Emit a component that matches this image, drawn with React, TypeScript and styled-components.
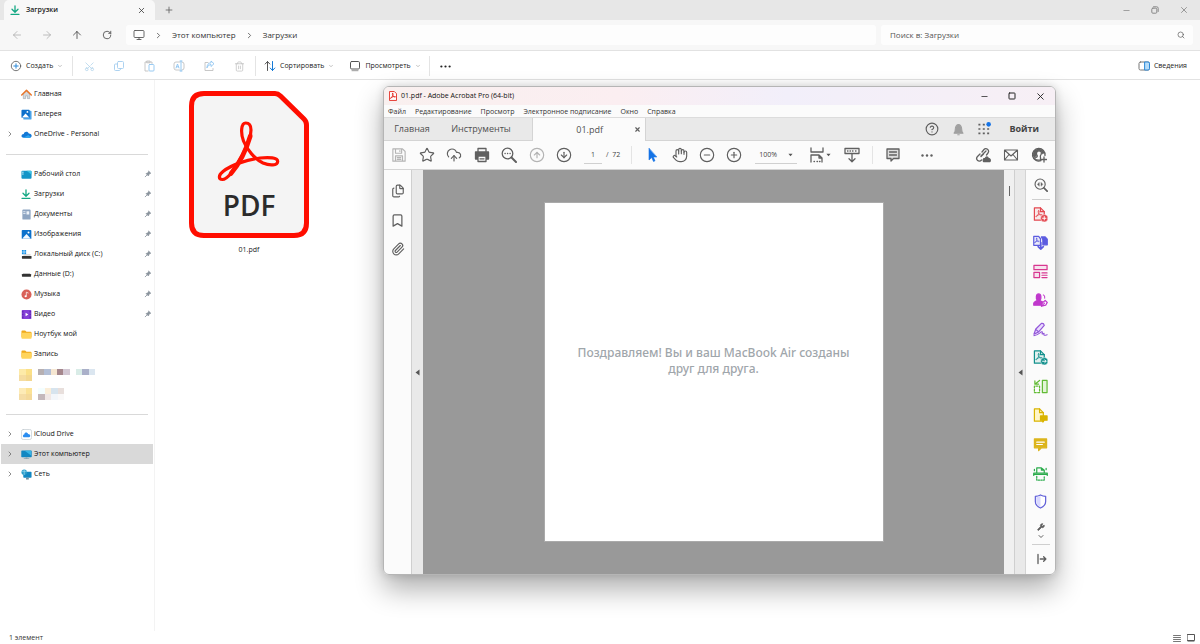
import React from 'react';
import styled, { createGlobalStyle, css } from 'styled-components';
import {
  ArrowLeft, ArrowRight, ArrowUp, RotateCw, Monitor, ChevronRight, ChevronDown, Search, X, Minus, Plus,
  CirclePlus, Scissors, Trash2, Star, CloudUpload, CircleArrowUp, CircleArrowDown, Hand, CircleMinus,
  CircleHelp, Paperclip, Bookmark, Wrench, Square, Files,
} from 'lucide-react';

const GlobalStyle = createGlobalStyle`
  *, *::before, *::after { box-sizing: border-box; }
  body { margin: 0; background: #fff; color: #222; font-family: "Open Sans", "Noto Sans", sans-serif; font-size: 7px; line-height: 10px; }
  button, input, select { font: inherit; color: inherit; border: 0; margin: 0; padding: 0; background: none; outline: 0; }
  ul { list-style: none; margin: 0; padding: 0; }
`;

/* ---------- shared parts ---------- */

const Art = styled.svg<{ $w?: number; $h?: number }>`
  display: block;
  flex: none;
  width: ${(p) => p.$w ?? 12}px;
  height: ${(p) => p.$h ?? p.$w ?? 12}px;
  fill: none;
  stroke-linejoin: round;
  stroke-linecap: round;
`;

const IconButton = styled.button<{ $size?: number; $tone?: string }>`
  display: flex;
  align-items: center;
  justify-content: center;
  flex: none;
  width: ${(p) => p.$size ?? 16}px;
  height: ${(p) => p.$size ?? 16}px;
  color: ${(p) => p.$tone ?? '#606060'};
`;

const Spacer = styled.div`
  flex: 1;
`;

/* ---------- explorer frame ---------- */

const Explorer = styled.div`
  display: flex;
  flex-direction: column;
  min-height: 100vh;
`;

const TabStrip = styled.header`
  display: flex;
  align-items: center;
  height: 20px;
  padding: 0 8px 0 4px;
  background: #e7e7e7;
`;

const ExplorerTab = styled.div`
  display: flex;
  align-items: center;
  align-self: flex-end;
  gap: 6px;
  width: 151px;
  height: 20px;
  padding: 0 8px 0 6px;
  border-radius: 5px 5px 0 0;
  background: #f8f8f8;
  font-weight: 600;
`;

const NewTab = styled(IconButton)`
  margin-left: 6px;
`;

const Controls = styled.div<{ $gap: number }>`
  display: flex;
  align-items: center;
  gap: ${(p) => p.$gap}px;
`;

const NavBar = styled.nav`
  display: flex;
  align-items: center;
  height: 31px;
  padding: 0 7px 0 9px;
  border-bottom: 1px solid #e2e2e2;
  background: #f7f7f7;
`;

const Address = styled.div`
  display: flex;
  flex: 1;
  align-items: center;
  gap: 9px;
  height: 20px;
  margin: 0 5px 0 11px;
  padding: 0 7px;
  border-radius: 3px;
  background: #fdfdfd;
  font-size: 8px;
`;

const Crumb = styled.a`
  color: #333;
  text-decoration: none;
`;

const SearchBox = styled.label`
  display: flex;
  align-items: center;
  width: 312px;
  height: 20px;
  padding: 0 8px 0 9px;
  border-radius: 3px;
  background: #fdfdfd;
  font-size: 8px;

  input { flex: 1; min-width: 0; }
  input::placeholder { color: #555; opacity: 1; }
`;

const CommandBar = styled.div`
  display: flex;
  align-items: center;
  height: 29px;
  padding: 2px 13px 0 10px;
  border-bottom: 1px solid #e2e2e2;
`;

const Command = styled.button<{ $width?: number }>`
  display: flex;
  align-items: center;
  gap: 4px;
  width: ${(p) => (p.$width ? `${p.$width}px` : 'auto')};
  color: #222;
  white-space: nowrap;
`;

const Rule = styled.span<{ $h: number }>`
  flex: none;
  width: 1px;
  height: ${(p) => p.$h}px;
  background: #e4e4e4;
`;

const FileActions = styled.div`
  display: flex;
  gap: 14px;
  padding: 0 8px;
`;

const SortGroup = styled.div`
  display: flex;
  gap: 15px;
  padding: 0 8px;
`;

const Body = styled.div`
  display: flex;
  flex: 1;
`;

/* ---------- sidebar ---------- */

const Sidebar = styled.aside`
  width: 155px;
  flex: none;
  padding: 4px 1px 0;
  border-right: 1px solid #f3f3f3;
`;

const Divider = styled.hr<{ $top: number }>`
  height: 1px;
  margin: ${(p) => p.$top}px 5px 9px 5px;
  border: 0;
  background: #d9d9d9;
`;

const Place = styled.button<{ $selected?: boolean }>`
  display: grid;
  grid-template-columns: 20px 11px 1fr 9px;
  align-items: center;
  width: 152px;
  height: 20px;
  text-align: left;
  color: #111;
  white-space: nowrap;
  ${(p) => p.$selected && css`background: #d9d9d9;`}

  > span:nth-child(1) { padding-left: 5px; display: flex; }
  > span:nth-child(3) { padding-left: 2px; }
`;

const Hidden = styled.div<{ $gap: number }>`
  display: flex;
  gap: 6px;
  padding: ${(p) => p.$gap}px 0 0 18px;
`;

/* ---------- file area ---------- */

const FileArea = styled.main`
  position: relative;
  flex: 1;
  padding: 11px 34px;
`;

const FileItem = styled.figure`
  display: flex;
  flex-direction: column;
  align-items: center;
  gap: 7px;
  width: 120px;
  margin: 0;
`;

const StatusBar = styled.footer`
  display: flex;
  align-items: center;
  height: 13px;
  padding: 0 5px 0 9px;
  color: #333;
`;

/* ---------- acrobat window ---------- */

const Window = styled.section`
  position: absolute;
  top: 6px;
  right: 144px;
  bottom: 56px;
  left: 228px;
  display: flex;
  flex-direction: column;
  overflow: hidden;
  border: 1px solid #b5b5b5;
  border-radius: 6px;
  background: #fbfbfb;
`;

const WindowShadow = styled.div`
  position: absolute;
  top: 6px;
  right: 144px;
  bottom: 56px;
  left: 228px;
  border-radius: 6px;
  box-shadow: 0 14px 28px rgba(0, 0, 0, 0.32), 0 0 8px rgba(0, 0, 0, 0.14);
`;

const TitleBar = styled.div`
  display: flex;
  align-items: center;
  gap: 4px;
  height: 18px;
  padding: 0 7px 0 5px;
  background: linear-gradient(90deg, #f9f0ef, #fbeef1 35%, #f2effa 60%, #f7eff5);
  color: #111;
`;

const MenuBar = styled.nav`
  display: flex;
  align-items: center;
  gap: 9px;
  height: 13px;
  padding: 1px 4px 0;
  border-bottom: 1px solid #dcdcdc;

  button { white-space: nowrap; color: #333; }
`;

const DocTabs = styled.div`
  display: flex;
  align-items: center;
  height: 23px;
  padding-right: 16px;
  border-bottom: 1px solid #d4d4d4;
  background: #e9e9e9;
  font-size: 9px;
  line-height: 12px;
  color: #505050;
`;

const DocTab = styled.button<{ $width: number }>`
  width: ${(p) => p.$width}px;
  text-align: center;
`;

const ActiveTab = styled.div`
  display: flex;
  align-items: center;
  justify-content: flex-end;
  gap: 26px;
  width: 114px;
  height: 23px;
  margin: 0 0 -1px 10px;
  border: solid #d4d4d4;
  border-width: 0 1px;
  background: #fbfbfb;
`;

const SignIn = styled.button`
  margin-left: 17px;
  font-weight: 700;
  color: #444;
`;

const Tools = styled.div`
  display: flex;
  align-items: center;
  height: 29px;
  padding: 0 8px 0 7px;
  border-bottom: 1px solid #d4d4d4;
  color: #444;
`;

const ToolGroup = styled.div<{ $width: number; $left?: number }>`
  display: flex;
  align-items: center;
  justify-content: space-between;
  flex: none;
  width: ${(p) => p.$width}px;
  margin-left: ${(p) => p.$left ?? 0}px;
`;

const PageField = styled.label`
  display: flex;
  align-items: center;
  gap: 4px;
  margin: 0 11px 0 12px;
  white-space: pre;

  input { width: 18px; height: 17px; border-bottom: 1px solid #d0d0d0; text-align: center; }
`;

const ZoomField = styled.label`
  display: flex;
  align-items: center;
  width: 42px;
  height: 17px;
  margin: 0 12px 0 13px;
  padding: 0 4px;
  border-bottom: 1px solid #d0d0d0;

  select { flex: 1; min-width: 0; appearance: none; }
`;

const Viewer = styled.div`
  display: flex;
  flex: 1;
`;

const LeftRail = styled.div`
  display: flex;
  flex-direction: column;
  align-items: center;
  gap: 13px;
  width: 27px;
  padding: 13px 0;
`;

const Handle = styled.div<{ $width: number }>`
  display: flex;
  align-items: center;
  justify-content: center;
  width: ${(p) => p.$width}px;
  border-left: 1px solid #cfcfcf;
  background: #e9e9e9;
`;

const Canvas = styled.div`
  display: flex;
  justify-content: center;
  align-items: flex-start;
  flex: 1;
  padding-top: 32px;
  background: #999;
`;

const Sheet = styled.article`
  display: flex;
  align-items: center;
  justify-content: center;
  width: 340px;
  aspect-ratio: 1;
  padding: 0 30px 22px;
  border: 1px solid #aaa;
  background: #fff;
  color: #9fa6ab;
  font-family: "Noto Sans", sans-serif;
  font-size: 12px;
  font-weight: 500;
  line-height: 16px;
  text-align: center;

  p { margin: 0; white-space: nowrap; }
`;

const Scrollbar = styled.div`
  display: flex;
  justify-content: center;
  width: 10px;
  padding-top: 16px;
  background: #f0f0f0;

  span { width: 1px; height: 10px; background: #666; }
`;

const RightRail = styled.div`
  display: flex;
  flex-direction: column;
  align-items: center;
  width: 30px;
  padding: 7px 0;
  border-left: 1px solid #d4d4d4;

  hr { flex: none; width: 18px; height: 1px; margin: 6px 0; border: 0; background: #cfcfcf; }
  hr:last-of-type { margin-top: 4px; }
`;

const RailTools = styled.div`
  display: flex;
  flex-direction: column;
  justify-content: space-between;
  height: 304px;
`;

/* ---------- drawings ---------- */

const TREFOIL =
  'M56.7 32C52 32 51.5 42 54.5 50C58 59 66 68 74 72C81 75 88.5 74.5 88.7 70.5C88.8 66.5 80 66 71 67C58 68.5 42 74 34 80.5C29 84.5 29.5 88.5 33.5 88.5C40 88.5 48 74.5 54 63C59 53 62 45 62 39C62 34 60 32 56.7 32Z';

const PdfIcon = () => (
  <Art $w={120} $h={147} viewBox="0 0 120 147">
    <path d="M15 2.500H86Q89 2.500 91.500 5L115 28Q117.500 30.500 117.500 34V132Q117.500 144.500 105 144.500H15Q2.500 144.500 2.500 132V15Q2.500 2.500 15 2.500Z" fill="#f4f4f4" stroke="#ff0d00" strokeWidth="5" />
    <path d={TREFOIL} stroke="#f10" strokeWidth="3.2" />
    <path d="M61.3 45C57.500 58 50 73 42 82.500" stroke="#f10" strokeWidth="4.600" />
    <text x="60" y="125" textAnchor="middle" fontFamily="'Open Sans', sans-serif" fontSize="28" fontWeight="600" fill="#2b2b2b">PDF</text>
  </Art>
);

const DownloadArt = ({ size = 10 }: { size?: number }) => (
  <Art $w={size} viewBox="0 0 10 10" stroke="#14a884" strokeWidth="1.3"><path d="M5 .8V7M2 4.300L5 7.200L8 4.300M1 9.300H9" /></Art>
);

const AcrobatArt = () => (
  <Art $w={8} $h={10} viewBox="0 0 9 11">
    <path d="M1 .5H6L8.500 3V10.500H.5V1Z" fill="#fff" stroke="#e2231a" />
    <path d={TREFOIL} transform="translate(-1.500 -.6) scale(.1)" stroke="#e2231a" strokeWidth="9" />
  </Art>
);

const Pin = () => (
  <Art $w={8} viewBox="0 0 10 10"><path d="M6 1.500L8.500 4L7.500 4.500L6 6L5.500 7.500L2.500 4.500L4 4L5.500 2.500Z" fill="#87919a" stroke="#87919a" strokeWidth=".8" /><path d="M3.500 6.500L1.500 8.500" stroke="#87919a" /></Art>
);

const Caret = () => <Art $w={5} $h={4} viewBox="0 0 6 4"><path d="M.5.500H5.500L3 3.500Z" fill="#555" /></Art>;
const Collapse = () => <Art $w={5} $h={7} viewBox="0 0 5 7"><path d="M4.500.5V6.500L.5 3.500Z" fill="#555" /></Art>;
const Dots = ({ w = 12 }: { w?: number }) => (
  <Art $w={w} $h={3} viewBox="0 0 12 3"><g fill="currentColor"><circle cx="1.500" cy="1.500" r="1.200" /><circle cx="6" cy="1.500" r="1.200" /><circle cx="10.500" cy="1.500" r="1.200" /></g></Art>
);

const placeArt: Record<string, React.ReactNode> = {
  home: <><path d="M2.500 5.500V10.500H5V7.500H7V10.500H9.500V5.500L6 2.500Z" fill="#d5d9dd" stroke="#9aa0a8" strokeWidth=".6" /><path d="M.8 6.500L6 1.500L11.200 6.500" stroke="#e8762c" strokeWidth="1.600" /></>,
  gallery: <><rect x="2.500" y="2" width="9" height="9.500" rx="1" fill="#4aa3e8" /><rect x=".5" y=".8" width="9" height="9" rx="1" fill="#0b6fcb" /><path d="M1 9.300L5 5L9 9.300Z" fill="#fff" /><circle cx="7" cy="3.200" r="1" fill="#fff" /></>,
  onedrive: <><path d="M3 9.500C-.5 9.500 0 5.500 3 5.500C3.500 2.500 7.500 2 8.500 5C12.500 5 12.500 9.500 9.500 9.500Z" fill="#1479d6" /><path d="M2.500 9.500L8 6.500L11 9Q10.500 9.500 9.500 9.500Z" fill="#2ba5f0" /></>,
  desktop: <><rect x=".5" y="2" width="11" height="8.500" rx="1" fill="#1495c8" /><path d="M6 2H10.500Q11.500 2 11.500 3V6Z" fill="#40c4e4" /><path d="M1.500 3.500H2.500M1.500 5.500H2.500" stroke="#c8f1ff" /></>,
  docs: <><rect x="1.500" y=".5" width="9" height="11" rx="1" fill="#8ea5c2" /><path d="M2.800 3H4.500M2.800 5H4.500" stroke="#e9f0f7" /><rect x="6" y="2.500" width="3" height="3.500" fill="#eef4fa" /></>,
  images: <><rect x=".8" y="1" width="10.500" height="10" rx="1" fill="#0b71cc" /><path d="M1.200 10.500L6 5.500L10.800 10.500Z" fill="#f2f9ff" /><circle cx="8.200" cy="3.700" r="1.100" fill="#fff" /></>,
  disk: <><path d="M1 1H3V3H1ZM3.600 1H5.600V3H3.600ZM1 3.600H3V5.600H1ZM3.600 3.600H5.600V5.600H3.600Z" fill="#1590e6" /><rect x="1" y="7.500" width="10.500" height="3" rx=".5" fill="#333" /><path d="M3 6.500H10" stroke="#b7b7b7" /></>,
  drive: <><path d="M2.500 5H9.500" stroke="#bbb" /><rect x="1" y="5.500" width="10" height="3" rx=".5" fill="#333" /></>,
  music: <><circle cx="6" cy="6" r="5.500" fill="#d96058" /><path d="M5.800 8V3.500L7.800 4.300" stroke="#fff" strokeWidth=".8" /><circle cx="5" cy="8" r="1.100" fill="#fff" /></>,
  video: <><rect x=".8" y="1" width="10.500" height="10" rx="1" fill="#8540d8" /><path d="M2 2.500V10M10 2.500V10" stroke="#4e1a9d" strokeDasharray="1 2" /><path d="M5 4L8 6L5 8Z" fill="#fff" /></>,
  folder: <><path d="M.5 2.500Q.5 1.500 1.500 1.500H4.500L6 3H10.500Q11.500 3 11.500 4V9H.5Z" fill="#efaa1c" /><rect x=".5" y="4" width="11" height="6.500" rx=".8" fill="#ffd45b" /></>,
  icloud: <><rect x=".5" y=".5" width="11" height="11" rx="2" fill="#fff" stroke="#c4ccd2" strokeWidth=".8" /><path d="M3.500 9C1.500 9 1.800 6 3.500 6C4 3.200 7 3.200 7.700 5.500C10.700 5.500 10.700 9 8.800 9Z" fill="#2b8df0" /></>,
  pc: <><rect x=".3" y="1.500" width="11.400" height="7.500" rx=".8" fill="#1287c2" /><path d="M5 9H7V10H9V11H3V10H5Z" fill="#8fa5b0" /><path d="M4 2H11V7Z" fill="#37b4e4" /></>,
  network: <><rect x="2.500" y="3" width="9" height="6.500" rx=".8" fill="#1287c2" /><path d="M5.500 9.500H8.500V11.500H5.500Z" fill="#718c9b" /><circle cx="3.500" cy="3.500" r="3" fill="#2b9cca" /><path d="M1 2.500H6M3.500 1V6" stroke="#b4e7fa" strokeWidth=".6" /></>,
};

interface PlaceData { id: string; label: string; pin?: boolean; open?: boolean; selected?: boolean }

const topPlaces: PlaceData[] = [
  { id: 'home', label: 'Главная' },
  { id: 'gallery', label: 'Галерея' },
  { id: 'onedrive', label: 'OneDrive - Personal', open: true },
];
const pinned: PlaceData[] = [
  { id: 'desktop', label: 'Рабочий стол', pin: true },
  { id: 'download', label: 'Загрузки', pin: true },
  { id: 'docs', label: 'Документы', pin: true },
  { id: 'images', label: 'Изображения', pin: true },
  { id: 'disk', label: 'Локальный диск (C:)', pin: true },
  { id: 'drive', label: 'Данные (D:)', pin: true },
  { id: 'music', label: 'Музыка', pin: true },
  { id: 'video', label: 'Видео', pin: true },
  { id: 'folder', label: 'Ноутбук мой' },
  { id: 'folder', label: 'Запись' },
];
const devices: PlaceData[] = [
  { id: 'icloud', label: 'iCloud Drive', open: true },
  { id: 'pc', label: 'Этот компьютер', open: true, selected: true },
  { id: 'network', label: 'Сеть', open: true },
];

const Places = ({ items }: { items: PlaceData[] }) => (
  <ul>
    {items.map((it) => (
      <li key={it.label}>
        <Place $selected={it.selected}>
          <span>{it.open && <ChevronRight size={8} color="#555" />}</span>
          {it.id === 'download' ? <DownloadArt /> : <Art $w={11} viewBox="0 0 12 12">{placeArt[it.id]}</Art>}
          <span>{it.label}</span>
          <span>{it.pin && <Pin />}</span>
        </Place>
      </li>
    ))}
  </ul>
);

const Blocks = ({ colors, columns, w }: { colors: string[]; columns: number; w: number }) => (
  <Art $w={w} $h={Math.ceil(colors.length / columns) * 6} viewBox={`0 0 ${columns} ${Math.ceil(colors.length / columns)}`} preserveAspectRatio="none" shapeRendering="crispEdges">
    {colors.map((c, i) => <rect key={i} x={i % columns} y={Math.floor(i / columns)} width="1" height="1" fill={c} />)}
  </Art>
);

const MiniPdf = ({ plus }: { plus?: boolean }) => (
  <>
    <path d="M1.500 1H8L12 5V14H1.500Z" fill="currentColor" fillOpacity=".1" />
    <path d="M8 1V5H12" />
    <path d={TREFOIL} transform="translate(-.5 .3) scale(.115)" strokeWidth="7" />
    <circle cx="12" cy="12" r="3.900" fill="currentColor" stroke="#fff" strokeWidth=".5" />
    <path d={plus ? 'M10.200 12H13.800M12 10.200V13.800' : 'M10.200 12H13.800M12.500 10.500L14 12L12.500 13.500'} stroke="#fff" strokeWidth="1" />
  </>
);

const railTools: { name: string; color: string; art: React.ReactNode }[] = [
  { name: 'Создать PDF', color: '#e34850', art: <MiniPdf plus /> },
  { name: 'Объединить', color: '#5c5ce0', art: <><path d="M.8 1.500H6L8 4V11H.8Z" fill="currentColor" fillOpacity=".1" /><path d="M9 2H13L15.200 4.500V10.500H10.500V5Z" fill="currentColor" /><path d={TREFOIL} transform="translate(-.9 .8) scale(.085)" strokeWidth="9" /><path d="M8.300 8V15M5.500 12.500L8.300 15L11 12.500" strokeWidth="1.800" /></> },
  { name: 'Упорядочить', color: '#d83790', art: <><path d="M1 1.500H15V6H1ZM1 9H7V14.500H1Z" fill="currentColor" fillOpacity=".12" /><path d="M9.500 9.500H15M9.500 12H15M9.500 14.500H15" strokeWidth="1.200" /></> },
  { name: 'Запрос подписей', color: '#c038cc', art: <><path d="M6 1C9 1 9 6 7.500 7.500C7.500 9 10 9 11 10L10 13H.8V11C.8 9 4.500 9 4.500 7.500C3 6 3 1 6 1Z" fill="currentColor" /><path d="M9 14L10 10.500L13 8L15.200 10L13.500 13Z" fill="#fff" /><path d="M9 14L12.300 10.800M11 2Q13 3 12.500 5.500" strokeWidth="1.100" /></> },
  { name: 'Заполнить и подписать', color: '#9256d9', art: <><path d="M1 13L3 7.500L9 1.500Q11.500 1 12 3.500L6 10.500L1 13ZM3 8L5.500 10" fill="#eadcff" /><path d="M1 14.500C6 14.500 9.500 8.500 10 11C9 14 10.500 12 11.800 12C11 14.500 12.500 14.500 15 13.500" strokeWidth="1.200" /></> },
  { name: 'Экспорт PDF', color: '#12908c', art: <MiniPdf /> },
  { name: 'Сжать', color: '#62bb35', art: <><path d="M10 1.500H15V14.500H10Z" fill="#e3f5d7" /><path d="M7 14.500H1.500V7.500H7Z" strokeDasharray="2 1.500" /><path d="M7 1.500L2 5.500M2 2V5.500H6" /></> },
  { name: 'Изменить PDF', color: '#d9b400', art: <><path d="M1.500 1H7L11 5V14H1.500Z" fill="#fff6c8" /><path d="M7 1V5H11" /><path d="M8 8.500H15V13H12L10.500 15V13H8Z" fill="currentColor" /></> },
  { name: 'Комментарий', color: '#dcb51c', art: <><path d="M1.500 2H14.500V11.500H9L6 14.500V11.500H1.500Z" fill="currentColor" /><path d="M4 5.500H12M4 8H10" stroke="#fff" /></> },
  { name: 'Сканирование', color: '#2bac4c', art: <><path d="M4 7V2H9L12 4.500V7M9 2V4.500H12M.8 10V7.500H15.200V10" /><path d="M1 9H15" /><path d="M4 11V15H12V11M14 4V1.500M1.500 3.500V5" strokeDasharray="1.500 1.300" /></> },
  { name: 'Защитить', color: '#6160d8', art: <><path d="M8 1Q10.500 2.500 13.500 2.500V8Q13.500 12.500 8 15Q2.500 12.500 2.500 8V2.500Q5.500 2.500 8 1Z" fill="#fff" /><path d="M8 2V14Q3.500 12 3.500 8V3.500Z" fill="#d9d9ff" stroke="none" /></> },
];

const AcroIcon = ({ children, size = 16 }: { children: React.ReactNode; size?: number }) => (
  <Art $w={size} viewBox="0 0 16 16" stroke="currentColor" strokeWidth="1.300">{children}</Art>
);

/* ---------- acrobat ---------- */

const Acrobat = () => (
  <Window aria-label="Adobe Acrobat">
    <TitleBar>
      <AcrobatArt />
      <span>01.pdf - Adobe Acrobat Pro (64-bit)</span>
      <Spacer />
      <Controls $gap={12}>
        <IconButton $tone="#222" aria-label="Свернуть"><Minus size={9} /></IconButton>
        <IconButton $tone="#222" aria-label="Развернуть"><Square size={8} strokeWidth={3} /></IconButton>
        <IconButton $tone="#222" aria-label="Закрыть"><X size={11} /></IconButton>
      </Controls>
    </TitleBar>
    <MenuBar>
      {['Файл', 'Редактирование', 'Просмотр', 'Электронное подписание', 'Окно', 'Справка'].map((m) => <button key={m}>{m}</button>)}
    </MenuBar>
    <DocTabs>
      <DocTab $width={56}>Главная</DocTab>
      <DocTab $width={82}>Инструменты</DocTab>
      <ActiveTab>
        <span>01.pdf</span>
        <IconButton aria-label="Закрыть вкладку"><X size={7} strokeWidth={4} /></IconButton>
      </ActiveTab>
      <Spacer />
      <Controls $gap={10}>
        <IconButton aria-label="Справка"><CircleHelp size={14} /></IconButton>
        <IconButton $tone="#a0a0a0" aria-label="Уведомления">
          <AcroIcon size={13}><path d="M2.500 12.500H13.500Q12 11 12 8C12 4 10 2 8 2C6 2 4 4 4 8Q4 11 2.500 12.500ZM7 14.500H9" fill="currentColor" /></AcroIcon>
        </IconButton>
        <IconButton aria-label="Приложения">
          <AcroIcon size={14}><path d="M2.500 3H3M7.500 3H8M2.500 8H3M7.500 8H8M12.500 8H13M2.500 13H3M7.500 13H8M12.500 13H13" strokeWidth="1.800" strokeLinecap="square" /><circle cx="13.300" cy="2.700" r="2.600" fill="#1473e6" stroke="none" /></AcroIcon>
        </IconButton>
      </Controls>
      <SignIn>Войти</SignIn>
    </DocTabs>
    <Tools>
      <ToolGroup $width={181}>
        <IconButton $tone="#b4b4b4" aria-label="Сохранить"><AcroIcon size={14}><path d="M1 1H12L15 4V15H1ZM4 1V6H11V1M4 15V9H12V15M6 11H10M6 13H10M9 3V4" /></AcroIcon></IconButton>
        <IconButton aria-label="Избранное"><Star size={16} strokeWidth={1.75} /></IconButton>
        <IconButton aria-label="Загрузить"><CloudUpload size={16} strokeWidth={1.75} /></IconButton>
        <IconButton aria-label="Печать"><AcroIcon><path d="M4 5V1.500H12V5" /><path d="M1.500 5H14.500V12H12V9H4V12H1.500Z" fill="currentColor" /><path d="M4 9H12V14.500H4ZM6 11.800H10" fill="#fbfbfb" /></AcroIcon></IconButton>
        <IconButton aria-label="Найти"><AcroIcon><circle cx="6.500" cy="6.500" r="5.300" /><path d="M10.500 10.500L15 15" strokeWidth="2" /><path d="M4 6.500H4.200M6.500 6.500H6.700M9 6.500H9.200" /></AcroIcon></IconButton>
        <IconButton $tone="#b4b4b4" aria-label="Назад"><CircleArrowUp size={16} strokeWidth={1.75} /></IconButton>
        <IconButton aria-label="Вперед"><CircleArrowDown size={16} strokeWidth={1.75} /></IconButton>
      </ToolGroup>
      <PageField><input aria-label="Страница" defaultValue="1" /><span>/  72</span></PageField>
      <Rule $h={18} />
      <ToolGroup $width={98} $left={12}>
        <IconButton $tone="#1473e6" aria-label="Выбор"><AcroIcon><path d="M5 1.500V13L7.700 10.500L9.500 14.500L11 13.800L9.300 10H12.500Z" fill="currentColor" strokeWidth=".6" /></AcroIcon></IconButton>
        <IconButton aria-label="Рука"><Hand size={16} strokeWidth={1.75} /></IconButton>
        <IconButton aria-label="Уменьшить"><CircleMinus size={16} strokeWidth={1.75} /></IconButton>
        <IconButton aria-label="Увеличить"><CirclePlus size={16} strokeWidth={1.75} /></IconButton>
      </ToolGroup>
      <ZoomField><select aria-label="Масштаб"><option>100%</option></select><Caret /></ZoomField>
      <Controls $gap={1}>
        <IconButton aria-label="По ширине"><AcroIcon><path d="M2 1V5H14V1M2 15V8H10L13 11V15M10 8V11H13M5 14.500H5.500M8 14.500H8.500M10.500 14.500H11" /></AcroIcon></IconButton>
        <Caret />
      </Controls>
      <ToolGroup $width={16} $left={13}>
        <IconButton aria-label="Прокрутка"><AcroIcon><path d="M1 1.500H15V6.500H1ZM3.500 4H4M6 4H6.500M8.500 4H9M11.500 4H12M8 6.500V14.500M5 11.800L8 14.700L11 11.800" /></AcroIcon></IconButton>
      </ToolGroup>
      <ToolGroup $width={1} $left={12}><Rule $h={18} /></ToolGroup>
      <ToolGroup $width={50} $left={12}>
        <IconButton aria-label="Комментарий"><AcroIcon><path d="M2 2H14V11.500H8.500L6 14V11.500H2Z" fill="#ddd" /><path d="M4.500 5H11.500M4.500 8H11.500" /></AcroIcon></IconButton>
        <IconButton aria-label="Ещё"><Dots /></IconButton>
      </ToolGroup>
      <Spacer />
      <ToolGroup $width={72}>
        <IconButton aria-label="Ссылка"><AcroIcon><path d="M6 9L11 4M7 5L9 2.500C11 0 15 3 13 6L11.500 8M8.500 7L6 9.500M5 7L2.500 9.500C0 12.500 4 16 6.500 13" /><path d="M8.500 14.500Q7.500 11.500 10 11.500Q12 8.500 13.500 11.500Q16 12 15 14.500Z" fill="currentColor" /></AcroIcon></IconButton>
        <IconButton aria-label="Почта"><AcroIcon><path d="M1.500 3H14.500V13H1.500ZM1.500 3L8 9L14.500 3M1.500 13L6 7.500M14.500 13L10 7.500" strokeWidth="1.100" /></AcroIcon></IconButton>
        <IconButton aria-label="Профиль"><AcroIcon><path d="M10 13.600A6.300 6.300 0 1 1 14 8.500" /><path d="M3.500 12C3.500 10.500 6.500 10.500 6.300 9C4.500 6.500 5.500 3.800 8 3.800C10.800 3.800 11 6.500 9.300 9L9.500 10.500V13Q6 13.500 3.500 12Z" fill="#fbfbfb" /><path d="M2 9Q1.500 2 8 1.700Q12 2 13.500 6L11 7Q11 3.800 8 3.800Q5 3.800 5.800 8L3.500 11Z" fill="currentColor" strokeWidth=".5" /><path d="M13 10V15M10.500 12.500H15.500" /></AcroIcon></IconButton>
      </ToolGroup>
    </Tools>
    <Viewer>
      <LeftRail>
        <IconButton aria-label="Миниатюры"><Files size={14} /></IconButton>
        <IconButton aria-label="Закладки"><Bookmark size={15} /></IconButton>
        <IconButton aria-label="Вложения"><Paperclip size={14} /></IconButton>
      </LeftRail>
      <Handle $width={12}><Collapse /></Handle>
      <Canvas>
        <Sheet><p>Поздравляем! Вы и ваш MacBook Air созданы<br />друг для друга.</p></Sheet>
      </Canvas>
      <Scrollbar><span /></Scrollbar>
      <Handle $width={11}><Collapse /></Handle>
      <RightRail>
        <IconButton aria-label="Поиск инструментов"><AcroIcon size={14}><circle cx="7" cy="7" r="5.800" /><path d="M11.300 11.300L15 15" strokeWidth="2" /><path d="M4 7L6 5V9ZM10 7L8 5V9Z" fill="currentColor" strokeWidth=".5" /></AcroIcon></IconButton>
        <hr />
        <RailTools>
          {railTools.map((t) => <IconButton key={t.name} aria-label={t.name} $tone={t.color}><AcroIcon size={15}>{t.art}</AcroIcon></IconButton>)}
        </RailTools>
        <Spacer />
        <IconButton $size={10} aria-label="Настроить"><Wrench size={8} fill="#606060" /></IconButton>
        <IconButton $size={8} aria-label="Вниз"><ChevronDown size={11} strokeWidth={3} /></IconButton>
        <hr />
        <IconButton aria-label="Свернуть панель"><AcroIcon size={12}><path d="M4 2V14M7 8H14.500M11.500 5L14.500 8L11.500 11" strokeWidth="1.800" /></AcroIcon></IconButton>
      </RightRail>
    </Viewer>
  </Window>
);

/* ---------- page ---------- */

export default function App() {
  return (
    <>
      <GlobalStyle />
      <Explorer>
        <TabStrip>
          <ExplorerTab>
            <DownloadArt />
            <span>Загрузки</span>
            <Spacer />
            <IconButton $size={12} $tone="#333" aria-label="Закрыть вкладку"><X size={9} /></IconButton>
          </ExplorerTab>
          <NewTab aria-label="Новая вкладка"><Plus size={10} /></NewTab>
          <Spacer />
          <Controls $gap={13}>
            <IconButton $tone="#888" aria-label="Свернуть"><Minus size={9} /></IconButton>
            <IconButton $tone="#888" aria-label="Восстановить"><Art $w={8} viewBox="0 0 8 8" stroke="currentColor"><rect x=".8" y="2.200" width="5" height="5" rx="1" /><path d="M2.500.8H5.700Q7.200.8 7.200 2.300V5.500" /></Art></IconButton>
            <IconButton $tone="#888" aria-label="Закрыть"><X size={10} /></IconButton>
          </Controls>
        </TabStrip>
        <NavBar>
          <Controls $gap={14}>
            <IconButton $tone="#aaa" aria-label="Назад"><ArrowLeft size={12} strokeWidth={1.5} /></IconButton>
            <IconButton $tone="#aaa" aria-label="Вперед"><ArrowRight size={12} strokeWidth={1.5} /></IconButton>
            <IconButton $tone="#333" aria-label="Вверх"><ArrowUp size={12} strokeWidth={1.5} /></IconButton>
            <IconButton $tone="#333" aria-label="Обновить"><RotateCw size={10} strokeWidth={1.75} /></IconButton>
          </Controls>
          <Address>
            <Monitor size={12} strokeWidth={1.75} color="#555" />
            <ChevronRight size={9} color="#444" />
            <Crumb href="#pc">Этот компьютер</Crumb>
            <ChevronRight size={9} color="#444" />
            <Crumb href="#downloads">Загрузки</Crumb>
          </Address>
          <SearchBox>
            <input type="search" aria-label="Поиск" placeholder="Поиск в: Загрузки" />
            <Search size={8} color="#555" />
          </SearchBox>
        </NavBar>
        <CommandBar>
          <Command $width={62}>
            <Art $w={12} viewBox="0 0 12 12"><circle cx="6" cy="6" r="4.700" stroke="#555" strokeWidth=".8" /><path d="M3.800 6H8.200M6 3.800V8.200" stroke="#2b88d8" /></Art>
            Создать<ChevronDown size={6} color="#888" />
          </Command>
          <Rule $h={20} />
          <FileActions>
            <IconButton aria-label="Вырезать"><Scissors size={11} strokeWidth={1.5} color="#a9cfe9" transform="rotate(-90)" /></IconButton>
            <IconButton $tone="#a4cdee" aria-label="Копировать"><Art $w={12} viewBox="0 0 12 12" stroke="currentColor" strokeWidth=".9"><rect x="4.500" y="1.500" width="6" height="7" rx="1" /><path d="M4.500 4H2.500Q1.500 4 1.500 5V9.500Q1.500 10.500 2.500 10.500H6.500Q7.500 10.500 7.500 8.500" /></Art></IconButton>
            <IconButton $tone="#a4cdee" aria-label="Вставить"><Art $w={12} viewBox="0 0 12 12" strokeWidth=".9"><path d="M5 11H2V2H9V3.500M4 1H7V2.800H4Z" stroke="#c2c2c2" /><rect x="6" y="4.500" width="5" height="6.500" rx=".8" stroke="#8dc4f0" /></Art></IconButton>
            <IconButton aria-label="Переименовать"><Art $w={12} viewBox="0 0 12 12" strokeWidth=".9"><path d="M7 2H3Q1 2 1 4V8Q1 10 3 10H7M9 2Q11 2 11 4V8Q11 10 9 10" stroke="#c2c2c2" /><path d="M3 8L4.500 4L6 8M3.500 6.800H5.500M8 1V11M7 1H9M7 11H9" stroke="#8dc4f0" /></Art></IconButton>
            <IconButton aria-label="Поделиться"><Art $w={12} viewBox="0 0 12 12" strokeWidth=".9"><path d="M5 2.500H2V10.500H10V8.500" stroke="#c2c2c2" /><path d="M4 7.500Q5 4.500 8 4.500V6.500L11 3.700L8 1V2.800Q4 3 4 7.500Z" stroke="#8dc4f0" /></Art></IconButton>
            <IconButton $tone="#bbb" aria-label="Удалить"><Trash2 size={11} strokeWidth={1.5} /></IconButton>
          </FileActions>
          <Rule $h={20} />
          <SortGroup>
            <Command>
              <Art $w={12} viewBox="0 0 12 12"><path d="M3.500 10.500V1.500M1.200 4L3.500 1.500L5.800 4" stroke="#555" /><path d="M8.500 1.500V10.500M6.200 8L8.500 10.500L10.800 8" stroke="#1479d6" /></Art>
              Сортировать<ChevronDown size={6} color="#888" />
            </Command>
            <Command>
              <Art $w={12} viewBox="0 0 12 12"><rect x="1.500" y="1.500" width="9" height="7.500" rx="1.200" stroke="#555" /><path d="M3 10.700H9" stroke="#999" /></Art>
              Просмотреть<ChevronDown size={6} color="#888" />
            </Command>
          </SortGroup>
          <Rule $h={20} />
          <FileActions><IconButton $tone="#222" aria-label="Ещё"><Dots w={11} /></IconButton></FileActions>
          <Spacer />
          <Command>
            <Art $w={12} viewBox="0 0 12 12"><rect x="1" y="2" width="10.500" height="8" rx="1.500" stroke="#777" /><path d="M7 2H10Q11.500 2 11.500 3.500V8.500Q11.500 10 10 10H7Z" fill="#b6dcf8" stroke="#2b88d8" /></Art>
            Сведения
          </Command>
        </CommandBar>
        <Body>
          <Sidebar>
            <Places items={topPlaces} />
            <Divider $top={10} />
            <Places items={pinned} />
            <Hidden $gap={5}>
              <Blocks w={13} columns={2} colors={['#fdeaa8', '#fbe087', '#f5dca0', '#f3d78f']} />
              <Blocks w={57} columns={9} colors={['#b7b0b2', '#b3bfd6', '#f6e7d2', '#a5878d', '#d3c8d4', '#fff', '#d9ece7', '#aab0c9', '#dbe6f0']} />
            </Hidden>
            <Hidden $gap={7}>
              <Blocks w={13} columns={2} colors={['#fdebb6', '#fbe295', '#f5dda6', '#f4d99a']} />
              <Blocks w={26} columns={4} colors={['#f4feff', '#fbeed9', '#d7e4ee', '#e8dfdc', '#c4b8bb', '#f1e8e6', '#f3f6fa', '#faf9f9']} />
            </Hidden>
            <Divider $top={14} />
            <Places items={devices} />
          </Sidebar>
          <FileArea>
            <FileItem>
              <PdfIcon />
              <figcaption>01.pdf</figcaption>
            </FileItem>
            <WindowShadow />
            <Acrobat />
          </FileArea>
        </Body>
        <StatusBar>
          <span>1 элемент</span>
          <Spacer />
          <Controls $gap={5}>
            <IconButton $size={9} aria-label="Список"><Art $w={8} viewBox="0 0 8 8" stroke="#555"><path d="M.5 1.500H7.500M.5 3.500H7.500M.5 5.500H7.500M.5 7.500H7.500" strokeWidth=".8" /></Art></IconButton>
            <IconButton $size={9} aria-label="Крупные значки"><Art $w={8} viewBox="0 0 8 8" stroke="#555"><rect x=".5" y=".5" width="7" height="6" /><path d="M1 7.600H7" strokeWidth=".6" /></Art></IconButton>
          </Controls>
        </StatusBar>
      </Explorer>
    </>
  );
}
